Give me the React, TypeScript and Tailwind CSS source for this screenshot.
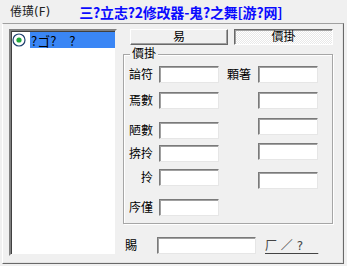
import React from 'react';

const CJK = "font-['Tahoma','DejaVu_Sans','Noto_Sans_CJK_SC',sans-serif]";

function Field({ className = '' }: { className?: string }) {
  return (
    <div
      className={`h-[17px] w-[60px] bg-white border border-t-[#7a7a7a] border-l-[#7a7a7a] border-b-[#e6e6e6] border-r-[#e6e6e6] shadow-[inset_1px_1px_0_#a0a0a0] ${className}`}
    />
  );
}

function Row({ label, mt, wide = false }: { label: string; mt: string; wide?: boolean }) {
  return (
    <div className={`flex items-center ${mt}`}>
      <span className={`w-[26px] text-right text-[12px] leading-none text-black ${CJK}`}>{label}</span>
      <Field className={wide ? 'ml-[6px] w-[60px]' : 'ml-[6px]'} />
    </div>
  );
}

export default function App() {
  return (
    <div className={`w-[347px] h-[266px] bg-[#f0f0f0] overflow-hidden ${CJK}`}>
      {/* Menu + title */}
      <div className="h-[23px] flex items-center">
        <span className="ml-[10px] text-[12px] leading-none text-[#222]">倦璜(F)</span>
        <span className="ml-[29px] text-[14px] leading-none font-bold text-[#0a0aff] font-['Noto_Sans_CJK_SC','Liberation_Serif',serif] tracking-[-0.2px]">
          三?立志?2修改器-鬼?之舞[游?网]
        </span>
      </div>

      {/* Main frame */}
      <div className="ml-[2px] w-[342px] h-[241px] border border-t-[#a0a0a0] border-l-[#ffffff] border-r-[#696969] border-b-[#696969] shadow-[inset_-1px_-1px_0_#e3e3e3] flex pl-[6px] pt-[5px]">
        {/* List box */}
        <div className="w-[108px] h-[227px] bg-white border-2 border-t-[#808080] border-l-[#808080] border-b-[#f0f0f0] border-r-[#f0f0f0] shadow-[inset_1px_1px_0_#404040]">
          <div className="flex items-center mt-[1px] h-[16px]">
            <svg width="14" height="14" viewBox="0 0 14 14" className="ml-[1px] shrink-0">
              <circle cx="7" cy="7" r="6" fill="#fff" stroke="#1e3f6e" strokeWidth="1.2" />
              <circle cx="7" cy="7" r="2.6" fill="#1fa83a" />
            </svg>
            <div className="ml-[4px] flex-1 h-[16px] bg-[#3a86f5] flex items-center pl-[1px]">
              <span className="text-[13px] leading-none text-black whitespace-pre font-['Noto_Sans_CJK_JP',sans-serif]">?ゴ?　?</span>
            </div>
          </div>
        </div>

        {/* Right area */}
        <div className="ml-[6px] flex flex-col">
          <div className="flex ml-[7px] gap-[6px]">
            <div className="w-[98px] h-[16px] flex items-center justify-center border border-t-white border-l-white border-r-[#696969] border-b-[#696969] shadow-[inset_-1px_-1px_0_#a0a0a0] text-[12px] leading-none text-black">
              易
            </div>
            <div className="w-[99px] h-[16px] flex items-center justify-center border border-t-[#696969] border-l-[#696969] border-r-white border-b-white shadow-[inset_1px_1px_0_#a0a0a0] bg-[repeating-conic-gradient(#ffffff_0_25%,#e8e8e8_0_50%)] bg-[length:2px_2px] text-[12px] leading-none text-black">
              價掛
            </div>
          </div>

          {/* Group box */}
          <div className="relative mt-[9px] w-[210px] h-[170px] border border-[#a6a6a6] shadow-[inset_1px_1px_0_#fff,1px_1px_0_#fff] flex pl-[3px]">
            <span className="absolute -top-[7px] left-[6px] px-[2px] bg-[#f0f0f0] text-[12px] leading-none text-black">價掛</span>
            <div className="flex flex-col">
              <Row label="諳符" mt="mt-[11px]" />
              <Row label="焉數" mt="mt-[9px]" />
              <Row label="陋數" mt="mt-[13px]" />
              <Row label="捹拎" mt="mt-[6px]" />
              <Row label="拎" mt="mt-[7px]" />
              <Row label="庈僅" mt="mt-[13px]" />
            </div>
            <div className="ml-[8px] flex flex-col">
              <div className="flex items-center mt-[11px]">
                <span className="w-[24px] text-[12px] leading-none text-black">顆箸</span>
                <Field className="ml-[7px]" />
              </div>
              <Field className="ml-[31px] mt-[9px]" />
              <Field className="ml-[31px] mt-[9px]" />
              <Field className="ml-[31px] mt-[8px]" />
              <Field className="ml-[31px] mt-[12px]" />
            </div>
          </div>

          {/* Bottom row */}
          <div className="flex items-center mt-[13px] ml-[2px]">
            <span className="text-[12px] leading-none text-black">賜</span>
            <Field className="ml-[20px] w-[99px]" />
            <span className="ml-[9px] text-[12px] leading-[14px] text-[#444] underline underline-offset-[3px] decoration-[#444] whitespace-pre">厂 ／ ?    </span>
          </div>
        </div>
      </div>
    </div>
  );
}
